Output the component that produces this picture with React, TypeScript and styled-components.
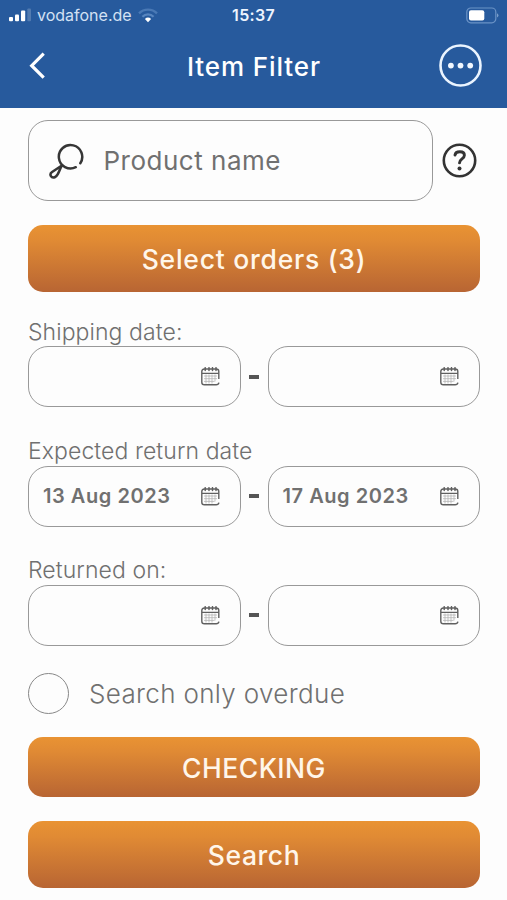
import React from "react";
import styled, { createGlobalStyle } from "styled-components";

const GlobalStyle = createGlobalStyle`
  * { box-sizing: border-box; }
  body { margin: 0; background: #fdfdfd; font-family: Inter, "Liberation Sans", sans-serif; }
  button { font-family: inherit; border: 0; padding: 0; background: none; color: inherit; }
  svg { display: block; flex: none; }
`;

const Screen = styled.div`
  width: 507px;
  height: 900px;
  overflow: hidden;
  background: #fdfdfd;
`;

const Header = styled.header`
  height: 108px;
  background: #275a9d;
  color: #fff;
`;

const StatusBar = styled.div`
  height: 30px;
  display: grid;
  grid-template-columns: 1fr auto 1fr;
  align-items: center;
  padding: 0 8px 0 8px;
`;

const Carrier = styled.div`
  display: flex;
  align-items: center;
  font-size: 16px;
  line-height: 30px;
  letter-spacing: 0;
  color: #d3e1f4;
`;

const CarrierName = styled.span`
  margin: 0 6px;
`;

const Clock = styled.div`
  font-size: 16px;
  font-weight: 600;
  letter-spacing: 0.3px;
  color: #edf4ff;
`;

const BatterySlot = styled.div`
  display: flex;
  justify-content: flex-end;
`;

const TitleBar = styled.div`
  height: 71px;
  display: grid;
  grid-template-columns: 60px 1fr 60px;
  align-items: center;
  padding: 0 25px 0 28px;
`;

const Title = styled.h1`
  margin: 0;
  padding: 2px 2px 0 0;
  text-align: center;
  font-size: 26px;
  font-weight: 500;
  letter-spacing: 0.9px;
`;

const IconButton = styled.button<{ $end?: boolean }>`
  display: flex;
  justify-content: ${(p) => (p.$end ? "flex-end" : "flex-start")};
`;

const Form = styled.main`
  padding: 12.4px 27px 0 28px;
`;

const SearchRow = styled.div`
  display: flex;
  align-items: center;
  gap: 9px;
  margin-bottom: 23.6px;
`;

const SearchBox = styled.div`
  width: 405px;
  height: 81px;
  display: flex;
  align-items: center;
  gap: 20px;
  padding-left: 18.5px;
  border: 1.4px solid #999;
  border-radius: 20px;
  font-size: 26px;
  letter-spacing: 0.5px;
  color: #707070;
`;

const GradientButton = styled.button<{ $height: number; $spacing: number }>`
  display: block;
  width: 452px;
  height: ${(p) => p.$height}px;
  padding-top: 2px;
  border-radius: 15px;
  background: linear-gradient(#e99333, #e08a34 24%, #b86533);
  color: #fff6ea;
  font-size: 26.5px;
  font-weight: 500;
  letter-spacing: ${(p) => p.$spacing}px;
`;

const DateGroup = styled.section`
  height: 119.2px;
  padding-top: 24px;
`;

const Label = styled.div`
  height: 30.5px;
  line-height: 32px;
  font-size: 23px;
  font-weight: 300;
  letter-spacing: 0.08px;
  color: #707070;
`;

const DateRow = styled.div`
  display: grid;
  grid-template-columns: 212.5px 1fr 212.5px;
  align-items: center;
`;

const DateField = styled.div`
  height: 61px;
  display: flex;
  align-items: center;
  justify-content: space-between;
  padding: 0 20px 0 14px;
  border: 1.4px solid #999;
  border-radius: 20px;
  font-size: 20px;
  font-weight: 600;
  letter-spacing: 0.55px;
  color: #707070;
`;

const Dash = styled.span`
  justify-self: center;
  width: 10px;
  height: 4px;
  background: #555;
`;

const CheckRow = styled.label`
  display: flex;
  align-items: center;
  gap: 20px;
  height: 41px;
  margin: 23px 0;
  font-size: 26px;
  font-weight: 300;
  letter-spacing: 0.34px;
  color: #707070;
`;

const Radio = styled.span`
  width: 41px;
  height: 41px;
  border: 1.5px solid #888;
  border-radius: 50%;
`;

const Actions = styled.div`
  display: grid;
  gap: 24px;
`;

const SignalIcon = () => (
  <svg width="23" height="14" viewBox="0 0 23 14" fill="#fff">
    <rect x="1" y="9" width="4" height="4.2" rx="1" />
    <rect x="7" y="6.5" width="4" height="6.7" rx="1" />
    <rect x="13" y="2.5" width="4.2" height="10.7" rx="1" />
    <rect x="19.3" y="0.5" width="3.7" height="12.7" rx="1" opacity="0.2" />
  </svg>
);

const WifiIcon = () => (
  <svg width="20" height="15" viewBox="0 0 20 15" fill="none">
    <path d="M1 5.3a12.8 12.8 0 0 1 18 0" stroke="#4a79b5" strokeWidth="2.4" />
    <path d="M4.4 8.7a8 8 0 0 1 11.2 0" stroke="#5785bf" strokeWidth="2.3" />
    <path d="M6.9 11a4.5 4.5 0 0 1 6.2 0L10 14.2Z" fill="#fff" />
  </svg>
);

const BatteryIcon = () => (
  <svg width="33" height="17" viewBox="0 0 33 17">
    <rect x="0.8" y="1" width="29" height="14.8" rx="4" fill="none" stroke="#6b93c6" strokeWidth="1.2" />
    <rect x="3" y="3.2" width="15.3" height="10.4" rx="2" fill="#fff" />
    <path d="M31.2 6.2q2.4 2.2 0 4.4Z" fill="#8eaed5" />
  </svg>
);

const BackIcon = () => (
  <svg width="18" height="28" viewBox="0 0 18 28" fill="none" stroke="#fff" strokeWidth="3.2">
    <path d="M15.7 1.7 3.7 13.7l12 12" />
  </svg>
);

const MoreIcon = () => (
  <svg width="43" height="43" viewBox="0 0 43 43" fill="#f1f7ff">
    <circle cx="21.5" cy="21.5" r="20" fill="none" stroke="#eaf4ff" strokeWidth="2.6" />
    <circle cx="11.9" cy="21.6" r="2.9" />
    <circle cx="21.5" cy="21.6" r="2.9" />
    <circle cx="31.2" cy="21.6" r="2.9" />
  </svg>
);

const MagnifierIcon = () => (
  <svg width="36" height="36" viewBox="0 0 36 36" fill="none" stroke="#363636" strokeWidth="2.5" strokeLinecap="round">
    <path d="M32.3 20.2A11.7 11.7 0 1 0 27.8 24.2" />
    <path d="M14.2 22.3 4.1 29C.8 31.2 3.2 35.9 7.2 34c3.7-2 3.8-7.6 7-11.7Z" strokeLinejoin="round" />
  </svg>
);

const HelpIcon = () => (
  <svg width="35" height="35" viewBox="0 0 35 35" fill="none" stroke="#333" strokeLinecap="round">
    <circle cx="17.5" cy="17.5" r="15.7" strokeWidth="2.6" />
    <path d="M13 12c.7-4.4 9.4-4.4 9.4.3 0 3.7-4.9 3.6-4.9 7.6" strokeWidth="2.9" />
    <circle cx="17.5" cy="25.4" r="2" fill="#333" stroke="none" />
  </svg>
);

const CalendarIcon = () => (
  <svg width="19" height="19" viewBox="0 0 19 19" fill="none" stroke="#606060">
    <path d="M17.8 12V4.6q0-2.6-2.6-2.6H3.4Q.8 2 .8 4.6v10.6q0 2.6 2.6 2.6h11.8q2.3 0 2.7-2.2M.8 6.4h17" strokeWidth="1.4" />
    <path d="M4.2.7v2.8M8 .7v2.8M11.5.7v2.8M15 .7v2.8" strokeWidth="1.5" strokeLinecap="round" />
    <path d="M3 9h13M3 11.7h13M3 14.4h10.5M5 7.5v9M8 7.5v9M11 7.5v9M14 7.5v7" strokeWidth="0.8" stroke="#b4b4b4" />
  </svg>
);

type RangeProps = { label: string; from?: string; to?: string };

const DateRange = ({ label, from = "", to = "" }: RangeProps) => (
  <DateGroup>
    <Label>{label}</Label>
    <DateRow>
      <DateField><span>{from}</span><CalendarIcon /></DateField>
      <Dash />
      <DateField><span>{to}</span><CalendarIcon /></DateField>
    </DateRow>
  </DateGroup>
);

export default function App() {
  return (
    <Screen>
      <GlobalStyle />
      <Header>
        <StatusBar>
          <Carrier><SignalIcon /><CarrierName>vodafone.de</CarrierName><WifiIcon /></Carrier>
          <Clock>15:37</Clock>
          <BatterySlot><BatteryIcon /></BatterySlot>
        </StatusBar>
        <TitleBar>
          <IconButton aria-label="Back"><BackIcon /></IconButton>
          <Title>Item Filter</Title>
          <IconButton $end aria-label="More"><MoreIcon /></IconButton>
        </TitleBar>
      </Header>
      <Form>
        <SearchRow>
          <SearchBox><MagnifierIcon /><span>Product name</span></SearchBox>
          <IconButton aria-label="Help"><HelpIcon /></IconButton>
        </SearchRow>
        <GradientButton $height={67} $spacing={0.75}>Select orders (3)</GradientButton>
        <DateRange label="Shipping date:" />
        <DateRange label="Expected return date" from="13 Aug 2023" to="17 Aug 2023" />
        <DateRange label="Returned on:" />
        <CheckRow><Radio /><span>Search only overdue</span></CheckRow>
        <Actions>
          <GradientButton $height={60} $spacing={0.5}>CHECKING</GradientButton>
          <GradientButton $height={67} $spacing={0.55}>Search</GradientButton>
        </Actions>
      </Form>
    </Screen>
  );
}
